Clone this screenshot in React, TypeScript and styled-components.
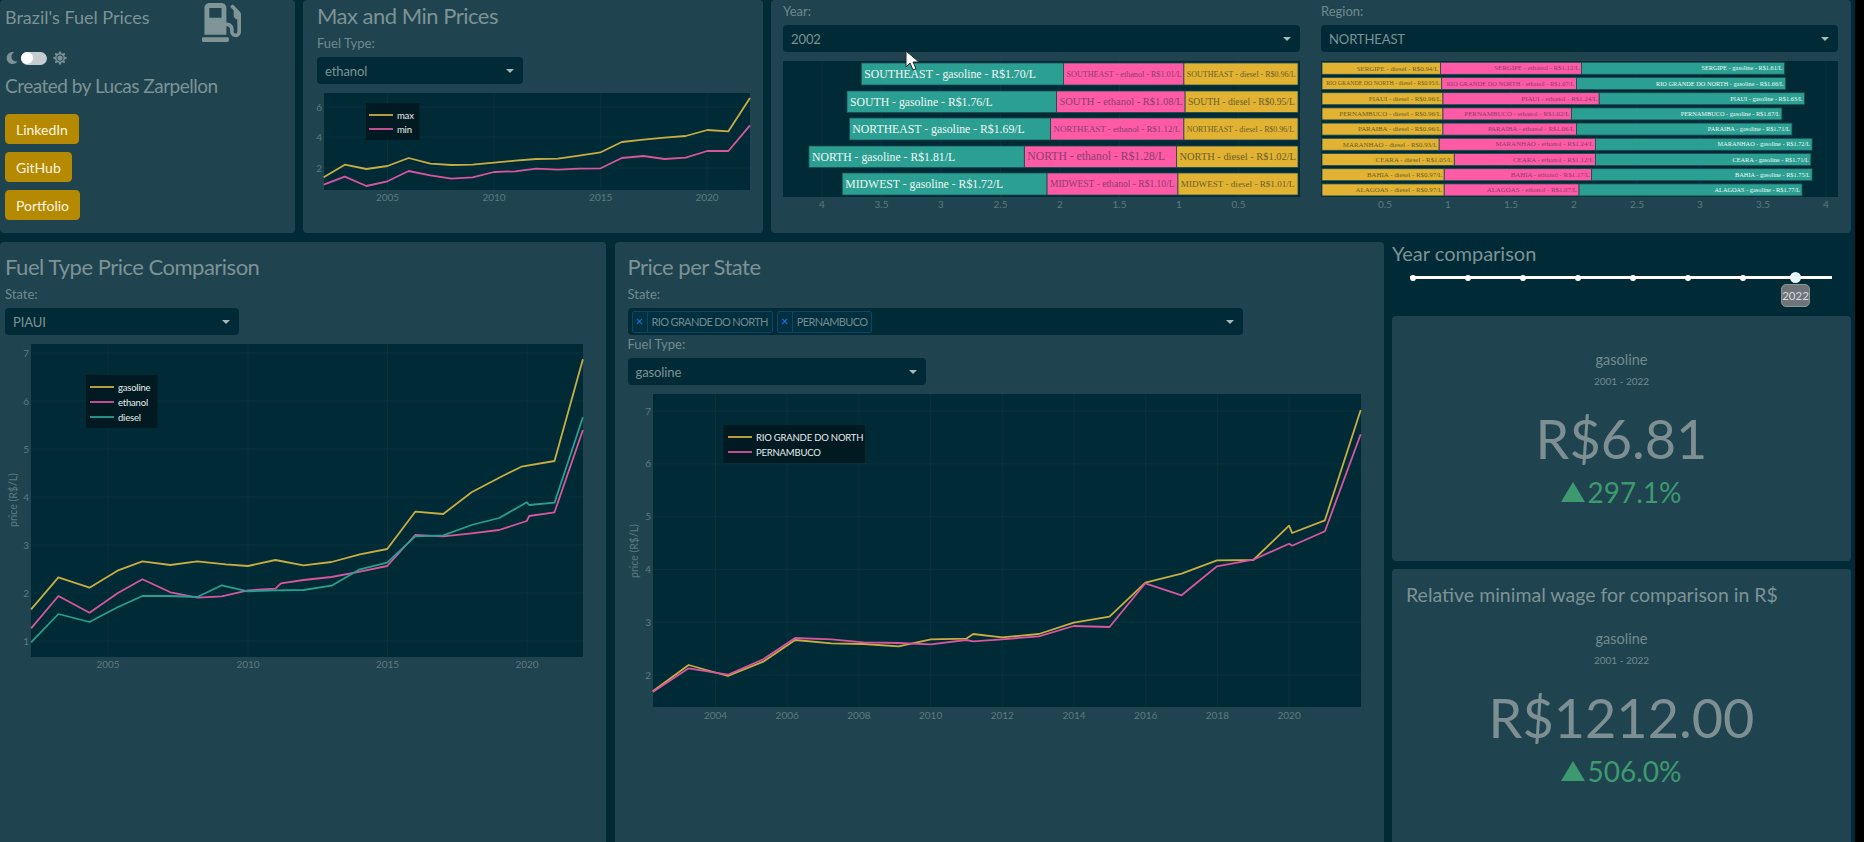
import React from "react";
import styled, { createGlobalStyle } from "styled-components";
import { FaGasPump, FaMoon, FaSun } from "react-icons/fa";

const GOLD = "#c9ad42";
const PINK = "#d9559f";
const TEAL = "#2a9d94";
const MUTED = "#7d9296";
const TICK = "#5d7a80";
const GRID = "#07323d";

type Trace = { color: string; points: number[][] };
type Scale = { ox: number; kx: number; oy: number; ky: number };

// points were read off a zoomed crop, so each chart carries the crop's scale
const toPoints = (pts: number[][], s: Scale) =>
    pts.map(([x, y]) => `${(s.ox + x / s.kx).toFixed(1)},${(s.oy + y / s.ky).toFixed(1)}`).join(" ");

const minMaxTraces: Trace[] = [
    { color: GOLD, points: [[659,532],[702,494],[746,507],[789,498],[832,474],[876,491],[919,495],[962,494],[1006,488],[1049,482],[1092,477],[1136,476],[1179,467],[1223,457],[1266,426],[1310,419],[1353,413],[1396,408],[1440,390],[1483,394],[1527,294]] },
    { color: PINK, points: [[659,554],[702,530],[746,558],[789,544],[832,513],[876,526],[919,536],[962,532],[1006,516],[1049,514],[1092,506],[1136,509],[1179,506],[1223,505],[1266,474],[1310,468],[1353,477],[1396,473],[1440,453],[1483,453],[1527,376]] },
];

const fuelTraces: Trace[] = [
    { color: GOLD, points: [[80,1108],[150,1012],[230,1043],[302,992],[366,964],[438,975],[507,964],[580,973],[637,978],[708,960],[780,976],[852,966],[925,943],[995,927],[1067,815],[1139,822],[1212,757],[1283,713],[1340,680],[1425,663],[1498,358]] },
    { color: PINK, points: [[80,1165],[150,1068],[230,1118],[302,1060],[366,1018],[438,1057],[507,1073],[570,1069],[637,1051],[708,1046],[722,1030],[780,1020],[852,1011],[925,995],[995,978],[1067,885],[1139,889],[1212,880],[1283,870],[1354,843],[1360,828],[1425,817],[1498,570]] },
    { color: TEAL, points: [[80,1207],[150,1122],[230,1146],[302,1102],[366,1068],[438,1068],[507,1071],[570,1036],[637,1054],[708,1051],[780,1050],[852,1037],[925,988],[995,968],[1067,889],[1139,886],[1212,855],[1283,834],[1354,787],[1360,795],[1425,788],[1498,532]] },
];

const stateTraces: Trace[] = [
    { color: GOLD, points: [[86,1354],[158,1275],[237,1308],[308,1265],[372,1200],[445,1210],[510,1212],[580,1219],[645,1198],[716,1196],[730,1182],[788,1192],[862,1182],[932,1148],[1004,1130],[1076,1028],[1149,1001],[1220,961],[1293,960],[1365,857],[1371,879],[1437,841],[1509,510]] },
    { color: PINK, points: [[86,1356],[158,1285],[237,1304],[308,1258],[372,1194],[445,1198],[510,1207],[580,1209],[645,1213],[716,1200],[730,1204],[788,1198],[862,1189],[932,1158],[1004,1161],[1076,1030],[1149,1066],[1220,979],[1293,959],[1365,911],[1371,917],[1437,874],[1509,583]] },
];

type Legend = { x: number; y: number; w: number; h: number; lineX: number; rows: { label: string; color: string; y: number }[] };

type LineChartProps = {
    view: number[];
    plot: { x: number; y: number; w: number; h: number };
    xTicks: { label: string; x: number }[];
    yTicks: { label: string; y: number }[];
    tickY: number;
    traces: Trace[];
    scale: Scale;
    legend: Legend;
    axisTitle?: { x: number; y: number };
};

const LineChart = ({ view, plot, xTicks, yTicks, tickY, traces, scale, legend, axisTitle }: LineChartProps) => (
    <ChartSvg width={view[2]} height={view[3]} viewBox={view.join(" ")}>
        <rect x={plot.x} y={plot.y} width={plot.w} height={plot.h} fill="#002b36" />
        {xTicks.map((t) => (
            <g key={t.label}>
                <line x1={t.x} x2={t.x} y1={plot.y} y2={plot.y + plot.h} stroke={GRID} />
                <text x={t.x} y={tickY} fill={TICK} fontSize="10" textAnchor="middle">{t.label}</text>
            </g>
        ))}
        {yTicks.map((t) => (
            <g key={t.label}>
                <line x1={plot.x} x2={plot.x + plot.w} y1={t.y} y2={t.y} stroke={GRID} />
                <text x={plot.x - 2} y={t.y + 3.5} fill={TICK} fontSize="10" textAnchor="end">{t.label}</text>
            </g>
        ))}
        {traces.map((t) => (
            <polyline key={t.color} points={toPoints(t.points, scale)} fill="none" stroke={t.color} strokeWidth="1.8" strokeLinejoin="round" />
        ))}
        <rect x={legend.x} y={legend.y} width={legend.w} height={legend.h} fill="#011a21" />
        {legend.rows.map((r) => (
            <g key={r.label}>
                <line x1={legend.lineX} x2={legend.lineX + 24} y1={r.y} y2={r.y} stroke={r.color} strokeWidth="1.8" />
                <LegendText x={legend.lineX + 28} y={r.y + 3.5}>{r.label}</LegendText>
            </g>
        ))}
        {axisTitle && (
            <text
                x={axisTitle.x}
                y={axisTitle.y}
                fill={TICK}
                fontSize="10.5"
                textAnchor="middle"
                transform={`rotate(-90 ${axisTitle.x} ${axisTitle.y})`}
            >
                price (R$/L)
            </text>
        )}
    </ChartSvg>
);

type Segment = { text: string; value: number; size: number };
type BarRow = { y: number; h: number; segments: Segment[] };

const FILL: Record<string, { bar: string; text: string }> = {
    gasoline: { bar: "#2c9f93", text: "#eef8f6" },
    ethanol: { bar: "#ff5aa6", text: "#8a3f70" },
    diesel: { bar: "#e2b232", text: "#6a5f2c" },
};

const seg = (name: string, fuel: string, value: number, size: number): Segment => ({
    text: `${name} - ${fuel} - R$${value.toFixed(2)}/L`,
    value,
    size,
});

const regionRows: BarRow[] = [
    { y: 63, h: 22, name: "SOUTHEAST", v: [1.7, 1.01, 0.96], s: [11.75, 8.1, 8] },
    { y: 91, h: 21.5, name: "SOUTH", v: [1.76, 1.08, 0.95], s: [11.75, 10.5, 9.6] },
    { y: 118, h: 22, name: "NORTHEAST", v: [1.69, 1.12, 0.96], s: [11.75, 8.9, 7.85] },
    { y: 146, h: 21.5, name: "NORTH", v: [1.81, 1.28, 1.02], s: [11.75, 11.7, 10.4] },
    { y: 173, h: 22, name: "MIDWEST", v: [1.72, 1.1, 1.01], s: [11.75, 9.55, 9.15] },
].map((r) => ({
    y: r.y,
    h: r.h,
    segments: [seg(r.name, "diesel", r.v[2], r.s[2]), seg(r.name, "ethanol", r.v[1], r.s[1]), seg(r.name, "gasoline", r.v[0], r.s[0])],
}));

const stateRows: BarRow[] = [
    { name: "SERGIPE", v: [0.94, 1.12, 1.61] },
    { name: "RIO GRANDE DO NORTH", v: [0.95, 1.07, 1.66] },
    { name: "PIAUI", v: [0.96, 1.24, 1.63] },
    { name: "PERNAMBUCO", v: [0.96, 1.02, 1.67] },
    { name: "PARAIBA", v: [0.96, 1.06, 1.71] },
    { name: "MARANHAO", v: [0.93, 1.24, 1.72] },
    { name: "CEARA", v: [1.05, 1.12, 1.71] },
    { name: "BAHIA", v: [0.97, 1.17, 1.75] },
    { name: "ALAGOAS", v: [0.97, 1.07, 1.77] },
].map((r, i) => {
    const long = r.name.length > 12;
    return {
        y: 62.3 + i * 15.2,
        h: 12,
        segments: [
            seg(r.name, "diesel", r.v[0], long ? 5.9 : 6.9),
            seg(r.name, "ethanol", r.v[1], long ? 6.45 : 6.85),
            seg(r.name, "gasoline", r.v[2], 6.3),
        ],
    };
});

type BarChartProps = {
    view: number[];
    zeroX: number;
    unit: number;
    direction: 1 | -1;
    rows: BarRow[];
    ticks: number[];
    tickY: number;
};

const BarChart = ({ view, zeroX, unit, direction, rows, ticks, tickY }: BarChartProps) => (
    <ChartSvg width={view[2]} height={view[3]} viewBox={view.join(" ")}>
        <rect x={view[0]} y={view[1]} width={view[2]} height={136} fill="#002b36" />
        {ticks.map((t) => {
            const x = zeroX + direction * t * unit;
            return (
                <g key={t}>
                    <line x1={x} x2={x} y1={view[1]} y2={view[1] + 136} stroke={GRID} />
                    <text x={x} y={tickY} fill={TICK} fontSize="10" textAnchor="middle">{t}</text>
                </g>
            );
        })}
        {rows.map((row) => {
            let sum = 0;
            return row.segments.map((s) => {
                const a = zeroX + direction * sum * unit;
                sum += s.value;
                const b = zeroX + direction * sum * unit;
                const fuel = s.text.split(" - ")[1];
                const left = Math.min(a, b);
                const width = Math.abs(b - a);
                return (
                    <g key={s.text}>
                        <rect x={left} y={row.y} width={width} height={row.h} fill={FILL[fuel].bar} stroke="#1c4a50" strokeWidth="0.8" />
                        <Inside
                            x={direction === -1 ? left + 3 : left + width - 2}
                            y={row.y + row.h / 2 + s.size * 0.32}
                            fill={FILL[fuel].text}
                            fontSize={s.size}
                            textAnchor={direction === -1 ? "start" : "end"}
                        >
                            {s.text}
                        </Inside>
                    </g>
                );
            });
        })}
    </ChartSvg>
);

const Select = ({ value, width }: { value: string; width?: number }) => (
    <SelectBox $width={width}>
        {value}
        <Caret />
    </SelectBox>
);

const Indicator = ({ value, delta }: { value: string; delta: string }) => (
    <>
        <StatName>gasoline</StatName>
        <StatRange>2001 - 2022</StatRange>
        <StatValue>{value}</StatValue>
        <StatDelta>
            <UpTriangle />
            {delta}
        </StatDelta>
    </>
);

const App = () => {
    return (
        <Page>
            <GlobalStyle />
            <TopRow>
                <Panel>
                    <BrandRow>
                        <BrandTitle>Brazil's Fuel Prices</BrandTitle>
                        <FaGasPump size={39} color="#7f9598" />
                    </BrandRow>
                    <ThemeRow>
                        <FaMoon size={12} />
                        <Toggle>
                            <Knob />
                        </Toggle>
                        <FaSun size={14} />
                    </ThemeRow>
                    <Credit>Created by Lucas Zarpellon</Credit>
                    <Links>
                        <LinkButton>LinkedIn</LinkButton>
                        <LinkButton>GitHub</LinkButton>
                        <LinkButton>Portfolio</LinkButton>
                    </Links>
                </Panel>

                <Panel>
                    <Controls $left={14} $top={3}>
                        <Heading>Max and Min Prices</Heading>
                        <Label>Fuel Type:</Label>
                        <Select value="ethanol" width={206} />
                    </Controls>
                    <LineChart
                        view={[303, 93, 460, 125]}
                        plot={{ x: 324, y: 93, w: 426, h: 97 }}
                        xTicks={[{ label: "2005", x: 387.5 }, { label: "2010", x: 494 }, { label: "2015", x: 600.7 }, { label: "2020", x: 707 }]}
                        yTicks={[{ label: "6", y: 107 }, { label: "4", y: 137 }, { label: "2", y: 168 }]}
                        tickY={201}
                        traces={minMaxTraces}
                        scale={{ ox: 0, kx: 2.036, oy: 0, ky: 3 }}
                        legend={{
                            x: 366, y: 103, w: 53.5, h: 37, lineX: 369,
                            rows: [{ label: "max", color: GOLD, y: 115 }, { label: "min", color: PINK, y: 129 }],
                        }}
                    />
                </Panel>

                <RegionPanel>
                    <RegionColumn>
                        <Label>Year:</Label>
                        <Select value="2002" />
                        <BarChart
                            view={[783, 61, 517, 155]}
                            zeroX={1298}
                            unit={119}
                            direction={-1}
                            rows={regionRows}
                            ticks={[0.5, 1, 1.5, 2, 2.5, 3, 3.5, 4]}
                            tickY={208}
                        />
                    </RegionColumn>
                    <RegionColumn>
                        <Label>Region:</Label>
                        <Select value="NORTHEAST" />
                        <BarChart
                            view={[1321, 61, 517, 155]}
                            zeroX={1322}
                            unit={126}
                            direction={1}
                            rows={stateRows}
                            ticks={[0.5, 1, 1.5, 2, 2.5, 3, 3.5, 4]}
                            tickY={208}
                        />
                    </RegionColumn>
                </RegionPanel>
            </TopRow>

            <BottomRow>
                <Panel>
                    <Controls $left={5} $top={12}>
                        <Heading>Fuel Type Price Comparison</Heading>
                        <Label>State:</Label>
                        <Select value="PIAUI" width={234} />
                    </Controls>
                    <LineChart
                        view={[0, 344, 606, 340]}
                        plot={{ x: 31, y: 344, w: 552, h: 313 }}
                        xTicks={[{ label: "2005", x: 108 }, { label: "2010", x: 248 }, { label: "2015", x: 387.5 }, { label: "2020", x: 527 }]}
                        yTicks={[7, 6, 5, 4, 3, 2, 1].map((v) => ({ label: String(v), y: 641 - (v - 1) * 48 }))}
                        tickY={668}
                        traces={fuelTraces}
                        scale={{ ox: 0, kx: 2.57, oy: 240, ky: 3 }}
                        legend={{
                            x: 86, y: 375, w: 71.5, h: 53, lineX: 90,
                            rows: [{ label: "gasoline", color: GOLD, y: 387 }, { label: "ethanol", color: PINK, y: 402 }, { label: "diesel", color: TEAL, y: 417 }],
                        }}
                        axisTitle={{ x: 17, y: 500 }}
                    />
                </Panel>

                <Panel>
                    <Controls $left={13} $top={12}>
                        <Heading>Price per State</Heading>
                        <Label>State:</Label>
                        <MultiSelect>
                            <Chip>
                                <ChipRemove>×</ChipRemove>
                                <ChipLabel>RIO GRANDE DO NORTH</ChipLabel>
                            </Chip>
                            <Chip>
                                <ChipRemove>×</ChipRemove>
                                <ChipLabel>PERNAMBUCO</ChipLabel>
                            </Chip>
                            <Caret />
                        </MultiSelect>
                        <TightLabel>Fuel Type:</TightLabel>
                        <Select value="gasoline" width={298} />
                    </Controls>
                    <LineChart
                        view={[615, 394, 769, 340]}
                        plot={{ x: 653, y: 394, w: 708, h: 313 }}
                        xTicks={[2004, 2006, 2008, 2010, 2012, 2014, 2016, 2018, 2020].map((y) => ({ label: String(y), x: 715.5 + (y - 2004) * 35.85 }))}
                        yTicks={[7, 6, 5, 4, 3, 2].map((v) => ({ label: String(v), y: 675 - (v - 2) * 52.8 }))}
                        tickY={719}
                        traces={stateTraces}
                        scale={{ ox: 610, kx: 2.01, oy: 240, ky: 3 }}
                        legend={{
                            x: 723.5, y: 425, w: 141.5, h: 38, lineX: 728,
                            rows: [{ label: "RIO GRANDE DO NORTH", color: GOLD, y: 437 }, { label: "PERNAMBUCO", color: PINK, y: 452 }],
                        }}
                        axisTitle={{ x: 638, y: 551 }}
                    />
                </Panel>

                <SideColumn>
                    <SideTitle>Year comparison</SideTitle>
                    <SliderTrack>
                        {[0, 1, 2, 3, 4, 5, 6].map((i) => (
                            <SliderDot key={i} />
                        ))}
                        <SliderHandle>
                            <SliderTip>2022</SliderTip>
                        </SliderHandle>
                    </SliderTrack>
                    <Card $height={245} $top={34}>
                        <Indicator value="R$6.81" delta="297.1%" />
                    </Card>
                    <Card $height={290} $top={11}>
                        <CardTitle>Relative minimal wage for comparison in R$</CardTitle>
                        <Indicator value="R$1212.00" delta="506.0%" />
                    </Card>
                </SideColumn>
            </BottomRow>

            <Pointer width="16" height="22" viewBox="0 0 16 22">
                <path d="M1 1v16l4-4 3 7 3-1.4-3-6.600h6z" fill="#fff" stroke="#1a2b30" strokeWidth="1" />
            </Pointer>
        </Page>
    );
};

const GlobalStyle = createGlobalStyle`
    html, body {
        margin: 0;
        background: #000;
    }

    body {
        font-family: Lato, "Open Sans", sans-serif;
        overflow: hidden;
    }
`;

const Page = styled.div`
    position: relative;
    width: 1855px;
    height: 842px;
    overflow: hidden;
    background: #002b36;
    color: ${MUTED};
`;

const TopRow = styled.div`
    display: grid;
    grid-template-columns: 295px 460px 1080px;
    column-gap: 8px;
    height: 233px;
`;

const BottomRow = styled.div`
    display: grid;
    grid-template-columns: 606px 769px 459px;
    column-gap: 8.5px;
    margin-top: 9px;
    height: 600px;
`;

const Panel = styled.section`
    background: #1f444f;
    border-radius: 4px;
    min-width: 0;
`;

const RegionPanel = styled(Panel)`
    display: grid;
    grid-template-columns: 517px 517px;
    column-gap: 21px;
    padding: 1px 0 0 12px;
`;

const RegionColumn = styled.div`
    min-width: 0;
`;

const ChartSvg = styled.svg`
    display: block;
    font-family: Lato, "Open Sans", sans-serif;
`;

const LegendText = styled.text`
    fill: #e6eeee;
    font-size: 9.5px;
    letter-spacing: -0.2px;
`;

const Inside = styled.text`
    font-family: "Liberation Serif", serif;
`;

const BrandRow = styled.div`
    display: flex;
    justify-content: space-between;
    align-items: flex-start;
    height: 44px;
    padding: 3px 54px 0 5px;
    box-sizing: border-box;
`;

const BrandTitle = styled.div`
    font-size: 18px;
    line-height: 28px;
`;

const ThemeRow = styled.div`
    display: flex;
    align-items: center;
    gap: 3px;
    height: 16px;
    margin-top: 6px;
    padding-left: 6px;
`;

const Toggle = styled.div`
    display: flex;
    align-items: center;
    width: 26px;
    height: 13px;
    border-radius: 7px;
    background: #c3ccce;
    margin-right: 3px;
`;

const Knob = styled.span`
    width: 12px;
    height: 12px;
    border-radius: 50%;
    background: #fff;
`;

const Credit = styled.div`
    font-size: 19px;
    letter-spacing: -0.5px;
    line-height: 26px;
    margin-top: 7px;
    padding-left: 5px;
`;

const Links = styled.div`
    display: flex;
    flex-direction: column;
    align-items: flex-start;
    gap: 8px;
    margin-top: 15px;
    padding-left: 5px;
`;

const LinkButton = styled.button`
    height: 30px;
    padding: 0 10px;
    border: 1px solid #b58900;
    border-radius: 4px;
    background: #b58900;
    color: #fdf6e3;
    font-family: inherit;
    font-size: 14px;
`;

const Controls = styled.div<{ $left: number; $top: number }>`
    padding: ${({ $top }) => $top}px 0 0 ${({ $left }) => $left}px;
`;

const Heading = styled.h2`
    margin: 0 0 4px;
    font-size: 22px;
    font-weight: 400;
    letter-spacing: -0.5px;
    line-height: 26px;
`;

const Label = styled.div`
    height: 20px;
    margin-bottom: 4px;
    font-size: 13px;
    line-height: 20px;
    color: #6f8a8f;
`;

const TightLabel = styled(Label)`
    height: 18px;
    line-height: 18px;
    margin-bottom: 5px;
`;

const SelectBox = styled.div<{ $width?: number }>`
    position: relative;
    display: flex;
    align-items: center;
    box-sizing: border-box;
    width: ${({ $width }) => ($width ? `${$width}px` : "100%")};
    height: 27px;
    margin-bottom: 9px;
    padding: 0 8px;
    border-radius: 4px;
    background: #002b36;
    font-size: 13px;
    letter-spacing: -0.1px;
    color: #7d9296;
`;

const Caret = styled.span`
    margin-left: auto;
    margin-right: 1px;
    border-left: 4px solid transparent;
    border-right: 4px solid transparent;
    border-top: 4.5px solid #a9b8ba;
`;

const MultiSelect = styled.div`
    display: flex;
    align-items: center;
    gap: 4px;
    box-sizing: border-box;
    width: 615px;
    height: 27px;
    padding: 0 8px 0 4px;
    border-radius: 4px;
    background: #002b36;
`;

const Chip = styled.div`
    display: flex;
    align-items: stretch;
    height: 22px;
    border: 1px solid #0a4766;
    border-radius: 2px;
    background: #002f40;
    box-sizing: border-box;
`;

const ChipRemove = styled.span`
    width: 14px;
    border-right: 1px solid #0a4766;
    text-align: center;
    color: #0a7ff0;
    font-size: 13px;
    line-height: 18px;
`;

const ChipLabel = styled.span`
    padding: 0 4px;
    font-size: 11px;
    letter-spacing: -0.65px;
    line-height: 20px;
    color: #75898c;
`;

const SideColumn = styled.div`
    min-width: 0;
`;

const SideTitle = styled.div`
    font-size: 20px;
    line-height: 22px;
`;

const SliderTrack = styled.div`
    display: flex;
    align-items: center;
    gap: 49px;
    width: 422px;
    height: 3px;
    margin: 12px 0 37px 18px;
    background: #fff;
`;

const SliderDot = styled.span`
    flex: none;
    width: 6px;
    height: 6px;
    border-radius: 50%;
    background: #fff;
`;

const SliderHandle = styled.span`
    position: relative;
    flex: none;
    width: 11px;
    height: 11px;
    margin-left: -5px;
    border-radius: 50%;
    background: #eaf6fb;
`;

const SliderTip = styled.span`
    position: absolute;
    top: 12px;
    left: -9px;
    width: 29px;
    height: 23px;
    box-sizing: border-box;
    border: 1px solid #8b9699;
    border-radius: 5px;
    background: #6e7478;
    color: #d6dadb;
    font-size: 11.5px;
    line-height: 21px;
    text-align: center;
`;

const Card = styled.div<{ $height: number; $top: number }>`
    box-sizing: border-box;
    height: ${({ $height }) => $height}px;
    margin-bottom: 8px;
    padding-top: ${({ $top }) => $top}px;
    border-radius: 4px;
    background: #1f444f;
    text-align: center;
`;

const CardTitle = styled.div`
    margin-bottom: 19px;
    padding-left: 14px;
    font-size: 19.5px;
    line-height: 30px;
    text-align: left;
`;

const StatName = styled.div`
    font-size: 14.5px;
    line-height: 20px;
    color: #738a8e;
`;

const StatRange = styled.div`
    margin-top: 4px;
    font-size: 10px;
    line-height: 14px;
    color: #738a8e;
`;

const StatValue = styled.div`
    margin-top: 16px;
    font-size: 54px;
    line-height: 70px;
    color: #7d8f92;
`;

const StatDelta = styled.div`
    display: flex;
    align-items: center;
    justify-content: center;
    gap: 2px;
    font-size: 28px;
    line-height: 36px;
    color: #3d9970;
`;

const UpTriangle = styled.span`
    border-left: 12px solid transparent;
    border-right: 12px solid transparent;
    border-bottom: 20px solid #3d9970;
`;

const Pointer = styled.svg`
    position: absolute;
    top: 50px;
    left: 905px;
`;

export default App;
